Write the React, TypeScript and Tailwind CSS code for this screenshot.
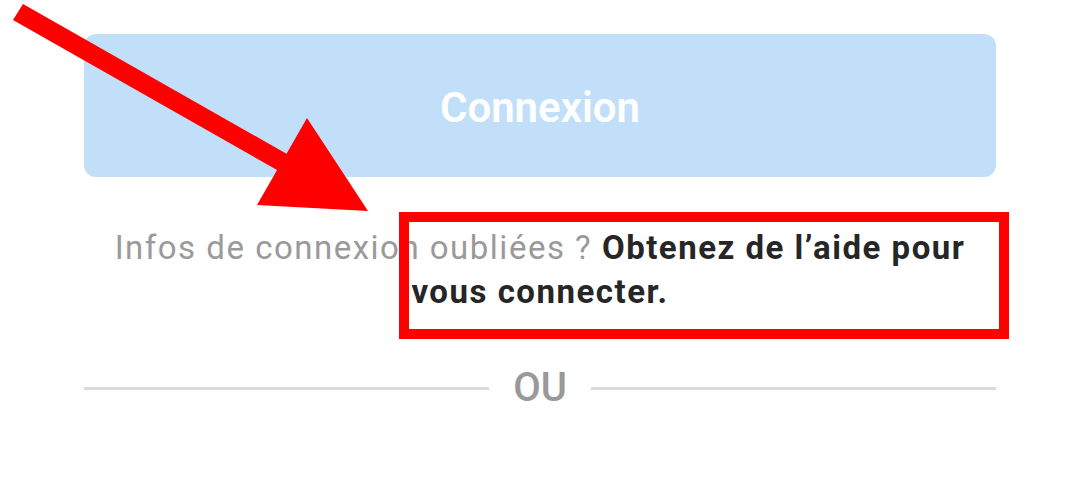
import React from "react";

export default function App() {
  return (
    <div className="relative w-[1080px] h-[486px] bg-white overflow-hidden" style={{ fontFamily: "Roboto, 'Noto Sans', sans-serif" }}>
      <div className="mx-[84px] pt-[34px] flex flex-col">
        <button className="h-[143px] w-full rounded-[12px] bg-[#c1dff9] flex items-center justify-center pt-[4px] text-white text-[42px] font-semibold leading-none">
          Connexion
        </button>
        <p className="mt-[49px] text-center text-[33px] leading-[44px] tracking-[1.5px] text-[#9a9a9a] px-[20px]">
          Infos de connexion oubliées ?{" "}
          <span className="font-bold text-[#262626]">Obtenez de l’aide pour vous connecter.</span>
        </p>
        <div className="mt-[50px] flex items-center h-[48px]">
          <div className="flex-1 h-[3px] bg-[#dbdbdb]" />
          <span className="mx-[24px] text-[40px] font-medium text-[#999999] leading-[48px]">OU</span>
          <div className="flex-1 h-[3px] bg-[#dbdbdb]" />
        </div>
      </div>

      {/* annotation box */}
      <div className="absolute left-[399px] top-[212px] w-[610px] h-[127px] border-[10px] border-[#ff0000]" />

      {/* annotation arrow */}
      <svg className="absolute left-0 top-0" width="1080" height="486" viewBox="0 0 1080 486">
        <polygon
          fill="#ff0000"
          points="23,4 286.5,153.8 307,118 368,211 257,205 277.1,170.1 13,20"
        />
      </svg>
    </div>
  );
}
